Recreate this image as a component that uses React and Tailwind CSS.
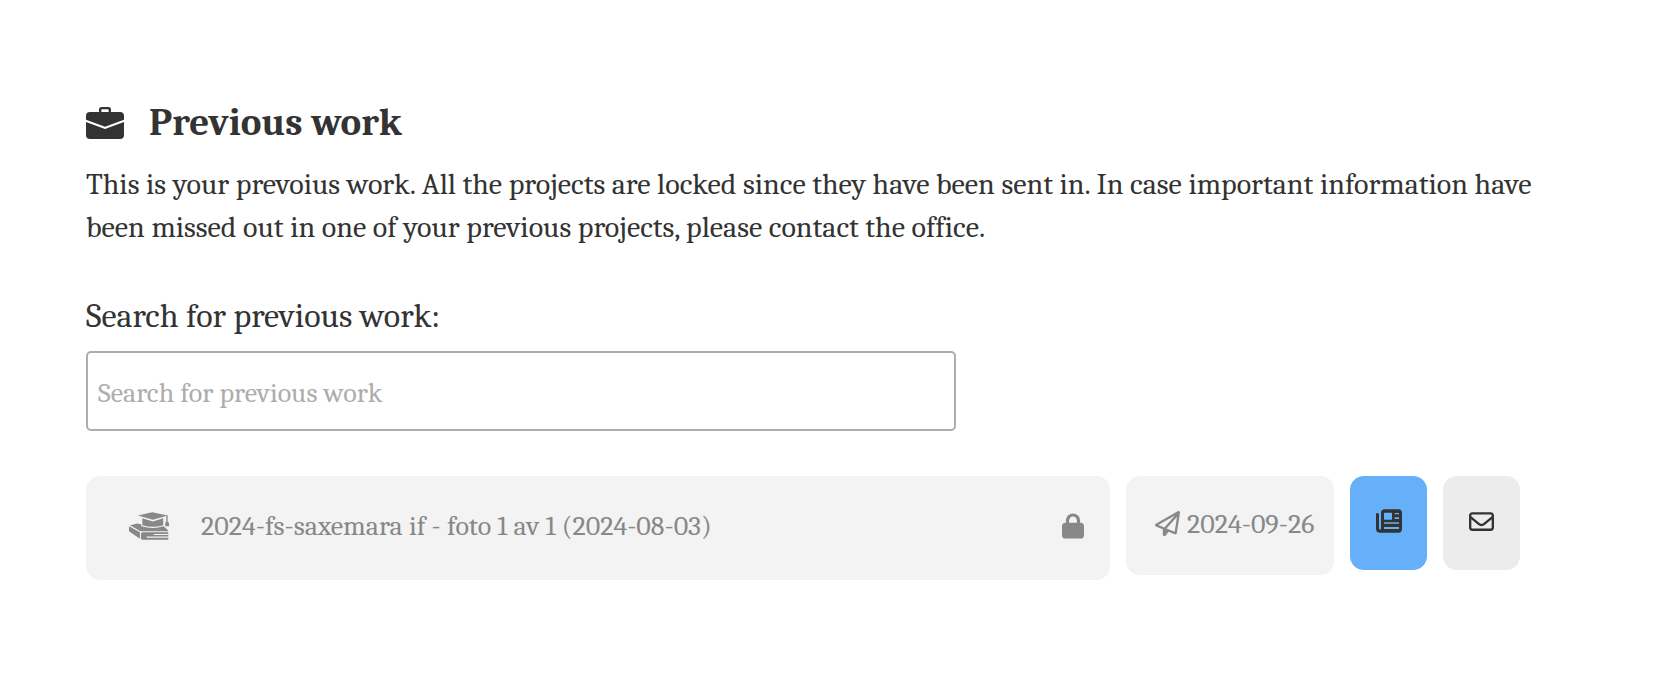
import { FaLock, FaRegEnvelope, FaRegPaperPlane } from "react-icons/fa6";

function BriefcaseIcon({ className }) {
  return (
    <svg viewBox="0 0 114 96" fill="currentColor" className={className} aria-hidden="true">
      <path fillRule="evenodd" d="M39 15V8Q39 0 47 0H67Q75 0 75 8V15H102Q114 15 114 27V38L57 59 0 38V27Q0 15 12 15ZM46 15H68V9Q68 7 66 7H48Q46 7 46 9Z" />
      <path d="M0 45 57 66 114 45V84Q114 96 102 96H12Q0 96 0 84Z" />
    </svg>
  );
}

function NewspaperIcon({ className }) {
  return (
    <svg viewBox="0 0 78 70" fill="currentColor" className={className} aria-hidden="true">
      <path fillRule="evenodd" d="M26 0H67Q78 0 78 11V59Q78 70 67 70H12Q0 70 0 58V15Q0 11 4 11T9 15V57Q9 61 12 61T15 57V11Q15 0 26 0ZM26 10Q24 10 24 12V29Q24 31 26 31H46Q48 31 48 29V12Q48 10 46 10ZM56 11V15H69V11ZM56 24V29H69V24ZM24 39V43H69V39ZM24 53V59H69V53Z" />
    </svg>
  );
}

function BooksIcon({ className }) {
  return (
    <svg viewBox="0 0 117 81" fill="currentColor" className={className} aria-hidden="true">
      <path d="M26 10 68 0 113 10 70 22Z" />
      <path d="M109 9H113V28L117 31V41H106V31L109 28Z" />
      <path d="M39 18 70 27 100 18V38Q70 47 39 38Z" />
      <path d="M3 38 24 33 36 36V41Q70 51 101 41L114 53V56H38L32 55Z" />
      <path d="M0 41 32 59V78L0 56Z" />
      <path fillRule="evenodd" d="M40 59H115V64H72V67H115V71H52V75H115V81H40Q35 81 35 76V64Q35 59 40 59Z" />
    </svg>
  );
}

export default function App() {
  return (
    <main className="px-[86px] pt-[97px] pb-16 font-[Cambria,Caladea,'Liberation_Serif',serif] text-[#333333]">
      <h1 className="flex items-center gap-[25px] text-[39px] leading-[52px] font-bold">
        <BriefcaseIcon className="h-8 w-[38px] shrink-0" />
        Previous work
      </h1>
      <p className="mt-[14px] text-[30px] leading-[43px]">
        This is your prevoius work. All the projects are locked since they have been sent in. In case important information have been missed out in one of your previous projects, please contact the office.
      </p>

      <label htmlFor="search" className="mt-[45px] block text-[34px] leading-[44px]">
        Search for previous work:
      </label>
      <input
        id="search"
        type="search"
        placeholder="Search for previous work"
        className="mt-[13px] block h-20 w-[58%] rounded-[5px] border-2 border-[#adadad] bg-white px-[10px] pt-1 text-[28px] placeholder:text-[#adadad]"
      />

      <div className="mt-[45px] mr-[66px] flex items-start gap-4">
        <div className="flex h-[104px] flex-1 items-center rounded-[14px] bg-[#f3f3f3] pr-[26px] pb-1 pl-[43px] text-[#888888]">
          <BooksIcon className="h-7 w-10 shrink-0" />
          <span className="ml-8 flex-1 text-[28px] leading-9">2024-fs-saxemara if - foto 1 av 1 (2024-08-03)</span>
          <FaLock className="h-[26px] w-[22px] shrink-0" aria-label="Locked" />
        </div>
        <div className="flex h-[99px] w-[208px] shrink-0 items-center gap-[7px] rounded-[14px] bg-[#f3f3f3] pb-1 pl-[29px] text-[28px] leading-9 text-[#888888]">
          <FaRegPaperPlane className="size-[25px] shrink-0" aria-hidden="true" />
          <time dateTime="2024-09-26" className="whitespace-nowrap">2024-09-26</time>
        </div>
        <button type="button" aria-label="News" className="flex h-[94px] w-[77px] shrink-0 items-center justify-center rounded-[14px] bg-[#66b0f9] pb-1">
          <NewspaperIcon className="h-6 w-[26px]" />
        </button>
        <button type="button" aria-label="Email" className="flex h-[94px] w-[77px] shrink-0 items-center justify-center rounded-[14px] bg-[#ececec] pb-1">
          <FaRegEnvelope className="size-[25px]" />
        </button>
      </div>
    </main>
  );
}
